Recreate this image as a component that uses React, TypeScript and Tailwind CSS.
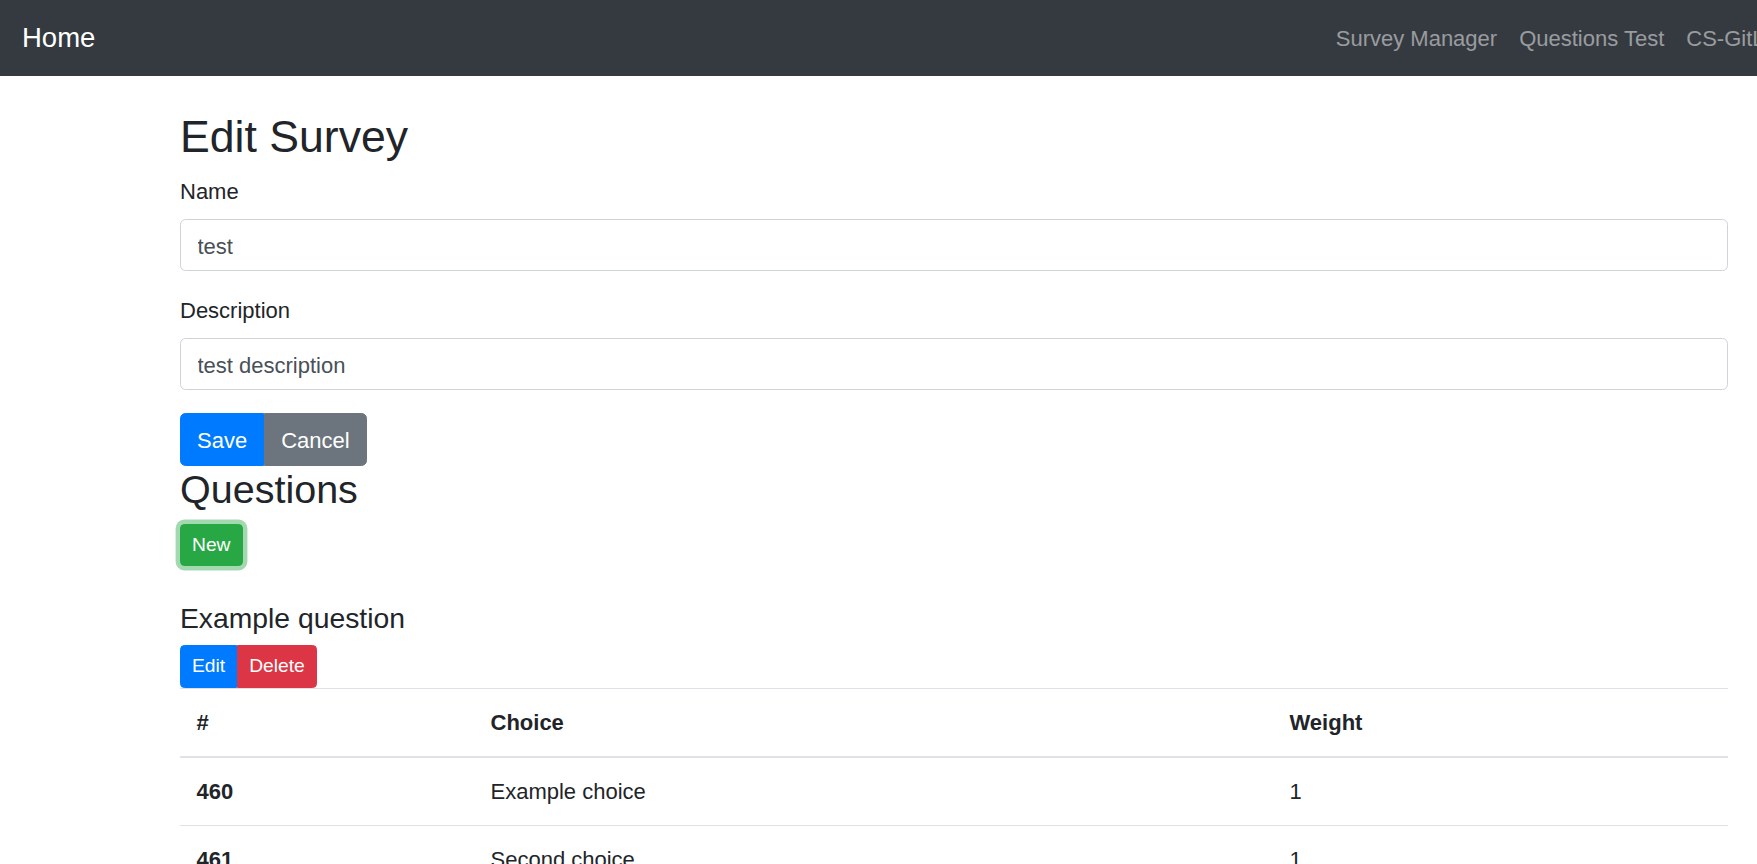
// Edit survey page: navbar, survey form, question list with choice table.
const font = { fontFamily: '"Liberation Sans", Arial, sans-serif' };

const choices = [
  { id: 460, text: 'Example choice', weight: 1 },
  { id: 461, text: 'Second choice', weight: 1 },
];

function NavBar() {
  return (
    <nav className="flex h-[76px] items-center overflow-hidden bg-[#343a40] px-[22px]">
      <a className="pb-[2px] text-[27.5px] leading-[41px] text-white">Home</a>
      <div className="-mr-[65px] ml-auto flex shrink-0">
        {['Survey Manager', 'Questions Test', 'CS-GitLab'].map((l) => (
          <a key={l} className="px-[11px] text-[22px] leading-[33px] text-white/50">{l}</a>
        ))}
      </div>
    </nav>
  );
}

function Field({ label, value }: { label: string; value: string }) {
  return (
    <div className="mb-[23px]">
      <label className="mb-[11px] block text-[22px] leading-[33px]">{label}</label>
      <input
        readOnly
        value={value}
        className="block h-[52px] w-full rounded-[5.5px] border border-[#ced4da] bg-white px-[16.5px] pt-[4px] text-[22px] text-[#495057] outline-none"
        style={font}
      />
    </div>
  );
}

export default function App() {
  const th = 'border-t border-[#dee2e6] px-[16.5px] py-[17px] text-left align-top font-bold';
  const td = 'border-t border-[#dee2e6] px-[16.5px] py-[17px] align-top';

  return (
    <div className="h-[864px] overflow-hidden bg-white text-[#212529]" style={font}>
      <NavBar />
      <main className="ml-[180px] w-[1548px]">
        <h2 className="mt-[34px] mb-[12px] text-[44.6px] leading-[53px] font-normal">Edit Survey</h2>
        <Field label="Name" value="test" />
        <Field label="Description" value="test description" />

        <div className="flex">
          <button className="h-[53px] rounded-l-[5.5px] border border-[#007bff] bg-[#007bff] px-[16px] pt-[1px] text-[22px] text-white">Save</button>
          <button className="h-[53px] rounded-r-[5.5px] border border-[#6c757d] bg-[#6c757d] px-[16px] pt-[1px] text-[22px] text-white">Cancel</button>
        </div>

        <h3 className="mb-[12px] text-[39.5px] leading-[46px] font-normal">Questions</h3>
        <button className="h-[42px] rounded-[4.4px] border border-[#28a745] bg-[#28a745] px-[11px] text-[19.25px] text-white shadow-[0_0_0_4.4px_rgba(72,180,97,0.5)]">
          New
        </button>

        <h5 className="mt-[35.5px] mb-[10px] text-[28.3px] leading-[33px] font-normal">Example question</h5>
        <div className="flex">
          <button className="h-[43px] rounded-l-[4.4px] border border-[#007bff] bg-[#007bff] px-[11px] text-[19.25px] text-white">Edit</button>
          <button className="h-[43px] rounded-r-[4.4px] border border-[#dc3545] bg-[#dc3545] px-[11px] text-[19.25px] text-white">Delete</button>
        </div>

        <table className="w-full text-[22px] leading-[33px]">
          <thead>
            <tr>
              <th className={`${th} w-[294px] border-b-2`}>#</th>
              <th className={`${th} w-[799px] border-b-2`}>Choice</th>
              <th className={`${th} border-b-2`}>Weight</th>
            </tr>
          </thead>
          <tbody>
            {choices.map((c) => (
              <tr key={c.id}>
                <th className={th}>{c.id}</th>
                <td className={td}>{c.text}</td>
                <td className={td}>{c.weight}</td>
              </tr>
            ))}
          </tbody>
        </table>
      </main>
    </div>
  );
}
